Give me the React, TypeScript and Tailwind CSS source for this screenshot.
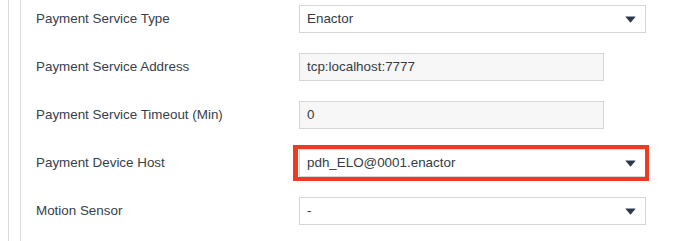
import { ReactNode } from "react";

type Field = {
  label: string;
  value: string;
  kind: "select" | "input";
  highlight?: boolean;
};

const FIELDS: Field[] = [
  { label: "Payment Service Type", value: "Enactor", kind: "select" },
  { label: "Payment Service Address", value: "tcp:localhost:7777", kind: "input" },
  { label: "Payment Service Timeout (Min)", value: "0", kind: "input" },
  { label: "Payment Device Host", value: "pdh_ELO@0001.enactor", kind: "select", highlight: true },
  { label: "Motion Sensor", value: "-", kind: "select" }
];

const Caret = () => (
  <svg width="11" height="7" viewBox="0 0 11 7" className="shrink-0">
    <path d="M0.8 0.6 H10.2 Q10.8 0.6 10.4 1.1 L5.9 6.2 Q5.5 6.6 5.1 6.2 L0.6 1.1 Q0.2 0.6 0.8 0.6 Z" fill="#2f3a48" />
  </svg>
);

function Control({ field }: { field: Field }) {
  const isSelect = field.kind === "select";
  return (
    <div
      className={
        isSelect
          ? "flex h-[28px] w-[347px] items-center justify-between border border-[#d6d6d6] bg-white pl-[7px] pr-[9px]"
          : "flex h-[28px] w-[305px] items-center border border-[#d6d6d6] bg-[#f7f7f7] pl-[7px]"
      }
    >
      <span className="text-[13.4px] text-[#333b45]">{field.value}</span>
      {isSelect && <Caret />}
    </div>
  );
}

function Highlight({ children }: { children: ReactNode }) {
  return (
    <div className="relative">
      {children}
      <div className="pointer-events-none absolute -left-[6px] -right-[3px] -top-[4px] -bottom-[4px] border-[4px] border-l-[5px] border-[#ec3b1f]" />
    </div>
  );
}

export default function App() {
  return (
    <div
      className="h-[241px] w-[684px] overflow-hidden bg-white pl-[8px]"
      style={{ fontFamily: '"Liberation Sans", Arial, sans-serif' }}
    >
      <div className="h-full border-l border-[#dcdcdc] pl-[11px]">
        <div className="h-full border-l border-[#dcdcdc] pl-[15px] pt-[5px]">
          <div className="flex flex-col gap-[20px]">
            {FIELDS.map((field) => (
              <div key={field.label} className="flex h-[28px] items-center">
                <div className="w-[263px] text-[13.4px] text-[#36404b]">{field.label}</div>
                {field.highlight ? (
                  <Highlight>
                    <Control field={field} />
                  </Highlight>
                ) : (
                  <Control field={field} />
                )}
              </div>
            ))}
          </div>
        </div>
      </div>
    </div>
  );
}
